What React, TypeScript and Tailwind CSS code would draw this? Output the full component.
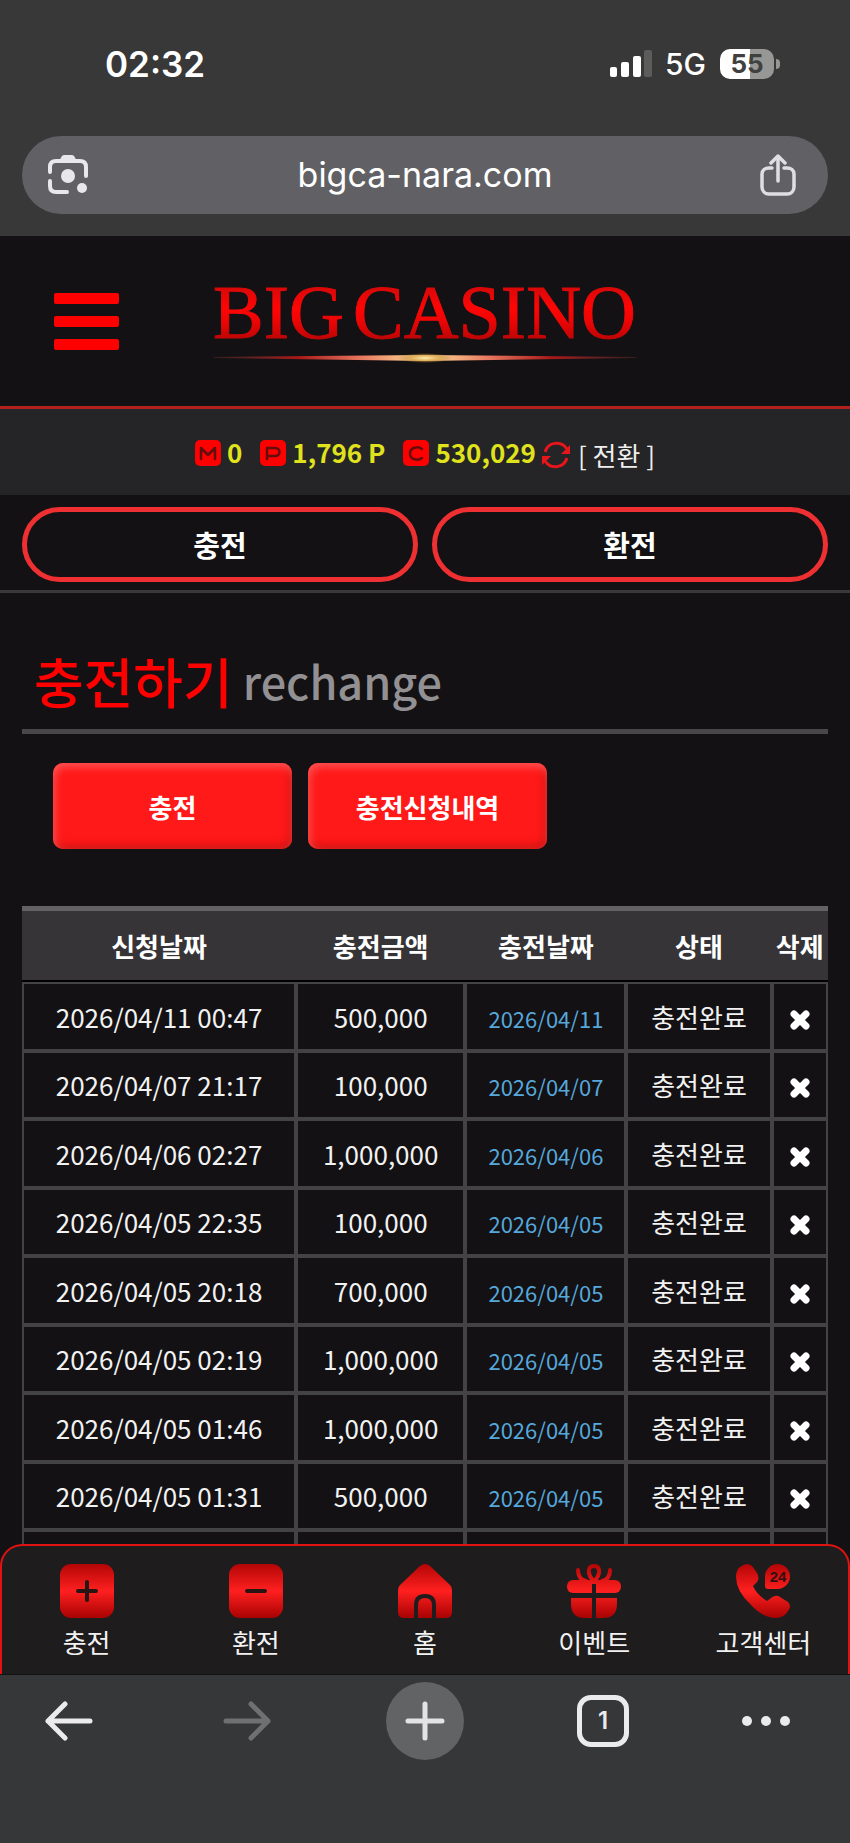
import type { ReactNode } from "react";

const rows = [
  { requested: "2026/04/11 00:47", amount: "500,000", charged: "2026/04/11" },
  { requested: "2026/04/07 21:17", amount: "100,000", charged: "2026/04/07" },
  { requested: "2026/04/06 02:27", amount: "1,000,000", charged: "2026/04/06" },
  { requested: "2026/04/05 22:35", amount: "100,000", charged: "2026/04/05" },
  { requested: "2026/04/05 20:18", amount: "700,000", charged: "2026/04/05" },
  { requested: "2026/04/05 02:19", amount: "1,000,000", charged: "2026/04/05" },
  { requested: "2026/04/05 01:46", amount: "1,000,000", charged: "2026/04/05" },
  { requested: "2026/04/05 01:31", amount: "500,000", charged: "2026/04/05" },
];

function StatusBar() {
  return (
    <div className="flex h-32 items-center justify-between pl-[105px] pr-[70px] text-white">
      <span className="text-[35px] font-semibold leading-10">02:32</span>
      <div className="flex items-center">
        <svg className="h-7 w-11" viewBox="0 0 44 28" fill="#fff">
          <rect x="1" y="17" width="7" height="10" rx="2" />
          <rect x="12" y="12" width="8" height="15" rx="2" />
          <rect x="24" y="6" width="8" height="21" rx="2" />
          <rect x="35" y="0" width="8" height="27" rx="2" fill="#5c5d5b" />
        </svg>
        <span className="ml-3 text-3xl font-medium">5G</span>
        <div className="ml-3.5 flex h-[30px] w-[54px] items-center justify-center overflow-hidden rounded-[10px] bg-gradient-to-r from-white from-55% to-[#979896] to-55%">
          <span className="text-[26px] font-bold leading-7 text-[#40413f]">55</span>
        </div>
        <div className="ml-0.5 h-2.5 w-1 rounded-r-full bg-[#979896]" />
      </div>
    </div>
  );
}

function AddressBar() {
  return (
    <div className="mx-[22px] mt-2 flex h-[78px] items-center justify-between rounded-full bg-[#616165] pl-6 pr-8">
      <button aria-label="Lens">
        <svg className="size-[44px]" viewBox="0 0 44 44" fill="none" stroke="#e8e7ec" strokeWidth="4" strokeLinecap="round">
          <path d="M4 19v-5c0-4 2-6 6-6h24c4 0 6 2 6 6v9" />
          <path d="M4 28v5c0 4 2 6 6 6h11" />
          <path d="M13 8l3-5q1-1 2-1h8q1 0 2 1l3 5z" fill="#e8e7ec" stroke="none" />
          <circle cx="22" cy="23" r="7" fill="#e8e7ec" stroke="none" />
          <circle cx="36" cy="35" r="5" fill="#e8e7ec" stroke="none" />
        </svg>
      </button>
      <span className="text-[34px] leading-10 text-white">bigca-nara.com</span>
      <button aria-label="Share">
        <svg className="h-[42px] w-9" viewBox="0 0 36 42" fill="none" stroke="#dedee3" strokeWidth="3.500" strokeLinecap="round" strokeLinejoin="round">
          <path d="M12 14H9c-4 0-7 2-7 6v13c0 4 3 7 7 7h18c4 0 7-3 7-7V20c0-4-3-6-7-6h-3" />
          <path d="M18 27V3m-7 6 7-7 7 7" />
        </svg>
      </button>
    </div>
  );
}

function Logo() {
  return (
    <svg className="h-[120px] w-[440px]" viewBox="0 0 440 120">
      <defs>
        <linearGradient id="logoRed" x1="0" x2="0" y1="0" y2="1">
          <stop offset="0.2" stopColor="#d80808" />
          <stop offset="0.45" stopColor="#ff0505" />
          <stop offset="0.6" stopColor="#ee0505" />
          <stop offset="0.85" stopColor="#b80505" />
        </linearGradient>
        <linearGradient id="logoLine" x1="0" x2="1" y1="0" y2="0">
          <stop offset="0" stopColor="#8a3a3a" stopOpacity="0.3" />
          <stop offset="0.2" stopColor="#a81818" />
          <stop offset="0.35" stopColor="#e87860" />
          <stop offset="0.5" stopColor="#ffe29a" />
          <stop offset="0.65" stopColor="#e87860" />
          <stop offset="0.8" stopColor="#a81818" />
          <stop offset="1" stopColor="#8a3a3a" stopOpacity="0.3" />
        </linearGradient>
        <radialGradient id="logoGlow">
          <stop offset="0" stopColor="#fff0b0" />
          <stop offset="0.5" stopColor="#dba850" stopOpacity="0.8" />
          <stop offset="1" stopColor="#a06a20" stopOpacity="0" />
        </radialGradient>
      </defs>
      <text y="77" fontSize="76" fontFamily="'Liberation Serif', serif" fill="url(#logoRed)" stroke="url(#logoRed)">
        <tspan x="8">BIG</tspan>
        <tspan x="148">CASINO</tspan>
      </text>
      <path d="M9 96 220 94l211 2v1l-211 3-211-3z" fill="url(#logoLine)" />
      <ellipse cx="220" cy="97" rx="28" ry="5" fill="url(#logoGlow)" />
    </svg>
  );
}

function Balance({ letter, children }: { letter: "M" | "P" | "C"; children: ReactNode }) {
  const shapes = {
    M: "M6 19V8l7 7 7-7v11",
    P: "M7 19V8h8c6 0 6 8 0 8H7",
    C: "M19 9c-4-3-12-2-12 4.500s8 7.500 12 4.500",
  };
  return (
    <span className="flex items-center gap-1.5">
      <svg className="mt-0.5 size-[26px]" viewBox="0 0 26 26">
        <rect width="26" height="26" rx="5" fill="#f00" />
        <path d={shapes[letter]} fill="none" stroke="#640d0e" strokeWidth="2.500" strokeLinecap="round" strokeLinejoin="round" />
      </svg>
      {children}
    </span>
  );
}

function BalanceBar() {
  return (
    <div className="flex h-[86px] items-center justify-center bg-[#252426] text-[26px] leading-9">
      <div className="flex items-center gap-[18px] font-bold text-[#dfe21d]">
        <Balance letter="M">0</Balance>
        <Balance letter="P">1,796 P</Balance>
        <Balance letter="C">530,029</Balance>
      </div>
      <button className="ml-1.5 mt-1.5 flex items-center gap-2 text-[#eee]">
        <svg className="size-7" viewBox="0 0 28 28" fill="none" stroke="#e8151b" strokeWidth="3">
          <path d="M3 11C6 1 19-1 25 8M25 17c-3 10-16 12-22 3" />
          <path d="M28 4v9h-9zM0 24v-9h9z" fill="#e8151b" stroke="none" />
        </svg>
        [ 전환 ]
      </button>
    </div>
  );
}

const cell = "border-2 border-[#434244] p-0";

function HistoryTable() {
  return (
    <table className="mt-[57px] w-full table-fixed border-separate border-spacing-0 text-center text-[26px] leading-9 text-[#f2f2f2]">
      <colgroup>
        <col className="w-[34%]" />
        <col className="w-[21%]" />
        <col className="w-[20%]" />
        <col className="w-[18%]" />
        <col className="w-[7%]" />
      </colgroup>
      <thead>
        <tr className="h-[76px] bg-[#363436] text-white">
          {["신청날짜", "충전금액", "충전날짜", "상태", "삭제"].map((h) => (
            <th key={h} className="whitespace-nowrap border-b-2 border-t-[5px] border-b-black border-t-[#636163] p-0 font-bold">
              {h}
            </th>
          ))}
        </tr>
      </thead>
      <tbody>
        {rows.map((r) => (
          <tr key={r.requested} className="odd:h-[69px] even:h-[68px]">
            <td className={cell}>{r.requested}</td>
            <td className={cell}>{r.amount}</td>
            <td className="border-2 border-[#434244] px-0 pb-0 pt-0.5 text-[22px] text-[#56a8dc]">{r.charged}</td>
            <td className={cell}>충전완료</td>
            <td className="border-2 border-[#434244] px-0 pb-0 pt-1.5">
              <button aria-label="삭제" className="block w-full">
                <svg className="mx-auto size-5" viewBox="0 0 20 20" stroke="#fff" strokeWidth="7">
                  <path d="M4 4l12 12M16 4 4 16" strokeLinecap="round" />
                </svg>
              </button>
            </td>
          </tr>
        ))}
        <tr className="h-[69px]">
          <td className={cell} />
          <td className={cell} />
          <td className={cell} />
          <td className={cell} />
          <td className={cell} />
        </tr>
      </tbody>
    </table>
  );
}

function NavItem({ label, children }: { label: string; children: ReactNode }) {
  return (
    <a href="#" className="flex flex-1 flex-col items-center gap-1.5 text-[26px] leading-9 text-[#f2f2f2]">
      <svg className="size-[54px]" viewBox="0 0 54 54" fill="url(#navRed)">
        {children}
      </svg>
      {label}
    </a>
  );
}

function SiteNav() {
  return (
    <nav className="flex h-[130px] shrink-0 rounded-t-[22px] border-2 border-b-0 border-[#e01212] bg-[#1e1c1d] pt-[18px]">
      <svg className="absolute size-0" aria-hidden="true">
        <defs>
          <linearGradient id="navRed" gradientUnits="userSpaceOnUse" x1="0" x2="0" y1="0" y2="54">
            <stop offset="0" stopColor="#b30505" />
            <stop offset="0.5" stopColor="#ff2020" />
            <stop offset="1" stopColor="#a80202" />
          </linearGradient>
        </defs>
      </svg>
      <NavItem label="충전">
        <rect width="54" height="54" rx="11" />
        <path d="M18 27h18M27 18v18" stroke="#271514" strokeWidth="4" strokeLinecap="round" />
      </NavItem>
      <NavItem label="환전">
        <rect width="54" height="54" rx="11" />
        <path d="M18 27h18" stroke="#271514" strokeWidth="4" strokeLinecap="round" />
      </NavItem>
      <NavItem label="홈">
        <path d="M22 2q5-4 10 0l20 19q2 2 2 5v22q0 6-6 6H38V41q0-11-11-11T16 41v13H6q-6 0-6-6V26q0-3 2-5z" />
        <path d="M20 54V41q0-7 7-7t7 7v13z" />
      </NavItem>
      <NavItem label="이벤트">
        <rect y="16" width="54" height="13" rx="6" />
        <path d="M4 34h46v6q0 14-14 14H18Q4 54 4 40z" />
        <path
          d="M11 6c0 7 3 10 8 11M43 6c0 7-3 10-8 11M27 2c-6 0-6 6-4 10q2 4 4 5 2-1 4-5c2-4 2-10-4-10z"
          fill="none"
          stroke="url(#navRed)"
          strokeWidth="4"
          strokeLinecap="round"
        />
        <path d="M25 20h4v34h-4zM4 29h46v4H4z" fill="#1e1c1d" />
      </NavItem>
      <NavItem label="고객센터">
        <path d="M4 3Q12-3 17 3l4 6q3 5 0 9l-4 4q4 9 14 15l4-3q5-4 9-1l8 5q4 4 0 9-4 7-12 7-13 0-25-13Q0 27 0 13 0 6 4 3z" />
        <path d="M41.500 0A12.500 12.500 0 1 1 41.500 25H32q-3 0-3-3v-9.500A12.500 12.500 0 0 1 41.500 0z" />
        <text x="42" y="18" textAnchor="middle" fontSize="15" fontWeight="700" fontFamily="'Liberation Sans', sans-serif" fill="#33100f">
          24
        </text>
      </NavItem>
    </nav>
  );
}

const toolButton = "flex h-[78px] w-[78px] items-center justify-center";

function BrowserToolbar() {
  return (
    <div className="flex h-[169px] shrink-0 items-start justify-between border-t border-[#111] bg-[#363738] px-[30px] pt-[7px]">
      <button aria-label="Back" className={toolButton}>
        <svg className="h-10 w-12" viewBox="0 0 48 40" fill="none" stroke="#ebebed" strokeWidth="5" strokeLinecap="round" strokeLinejoin="round">
          <path d="M45 20H3M20 3 3 20l17 17" />
        </svg>
      </button>
      <button aria-label="Forward" className={toolButton}>
        <svg className="h-10 w-12" viewBox="0 0 48 40" fill="none" stroke="#6f7072" strokeWidth="5" strokeLinecap="round" strokeLinejoin="round">
          <path d="M3 20h42M28 3l17 17-17 17" />
        </svg>
      </button>
      <button aria-label="New tab" className="flex size-[78px] items-center justify-center rounded-full bg-[#626365]">
        <svg className="size-10" viewBox="0 0 40 40" stroke="#e3e3e6" strokeWidth="5" strokeLinecap="round">
          <path d="M3 20h34M20 3v34" />
        </svg>
      </button>
      <button aria-label="Tabs" className={toolButton}>
        <span className="flex size-[52px] items-center justify-center rounded-[14px] border-[5px] border-[#ebebed] font-[Inter,sans-serif] text-2xl font-semibold text-[#ebebed]">
          1
        </span>
      </button>
      <button aria-label="More" className="flex h-[78px] w-[78px] items-center">
        <svg className="h-3 w-12" viewBox="0 0 48 12" fill="#ebebed">
          <circle cx="5" cy="6" r="5" />
          <circle cx="24" cy="6" r="5" />
          <circle cx="43" cy="6" r="5" />
        </svg>
      </button>
    </div>
  );
}

const pill = "h-[75px] flex-1 rounded-full border-[5px] border-[#ee3032]";
const redButton = "h-[86px] w-[239px] rounded-[10px] bg-[#ff1919] shadow-[inset_2px_4px_8px_#f55,inset_-2px_-3px_8px_#c41212]";

export default function App() {
  return (
    <div className="flex h-screen flex-col overflow-hidden bg-[#131113] font-['Noto_Sans_CJK_KR',sans-serif]">
      <div className="h-[236px] shrink-0 bg-[#373837] font-[Inter,sans-serif]">
        <StatusBar />
        <AddressBar />
      </div>

      <main className="min-h-0 flex-1 overflow-hidden">
        <header className="relative flex h-[173px] items-center justify-center border-b-[3px] border-[#b3211f]">
          <button aria-label="Menu" className="absolute left-[54px] flex w-[65px] flex-col gap-3">
            <span className="h-[11px] rounded-xs bg-[#f00]" />
            <span className="h-[11px] rounded-xs bg-[#f00]" />
            <span className="h-[11px] rounded-xs bg-[#f00]" />
          </button>
          <Logo />
        </header>
        <BalanceBar />
        <div className="flex gap-3.5 border-b-[3px] border-[#39383a] px-[22px] pb-2 pt-3 text-[29px] font-bold text-white">
          <button className={pill}>충전</button>
          <button className={pill}>환전</button>
        </div>

        <section className="px-[22px]">
          <h1 className="flex h-[141px] items-end gap-2.5 border-b-[5px] border-[#49474a] px-3 pb-3 font-medium leading-[72px]">
            <span className="text-[54px] text-[#f00]">충전하기</span>
            <span className="text-[45px] text-[#929092]">rechange</span>
          </h1>
          <div className="mt-[29px] flex gap-4 pl-[31px] text-[26px] font-bold text-white">
            <button className={redButton}>충전</button>
            <button className={redButton}>충전신청내역</button>
          </div>
          <HistoryTable />
        </section>
      </main>

      <SiteNav />
      <BrowserToolbar />
    </div>
  );
}
